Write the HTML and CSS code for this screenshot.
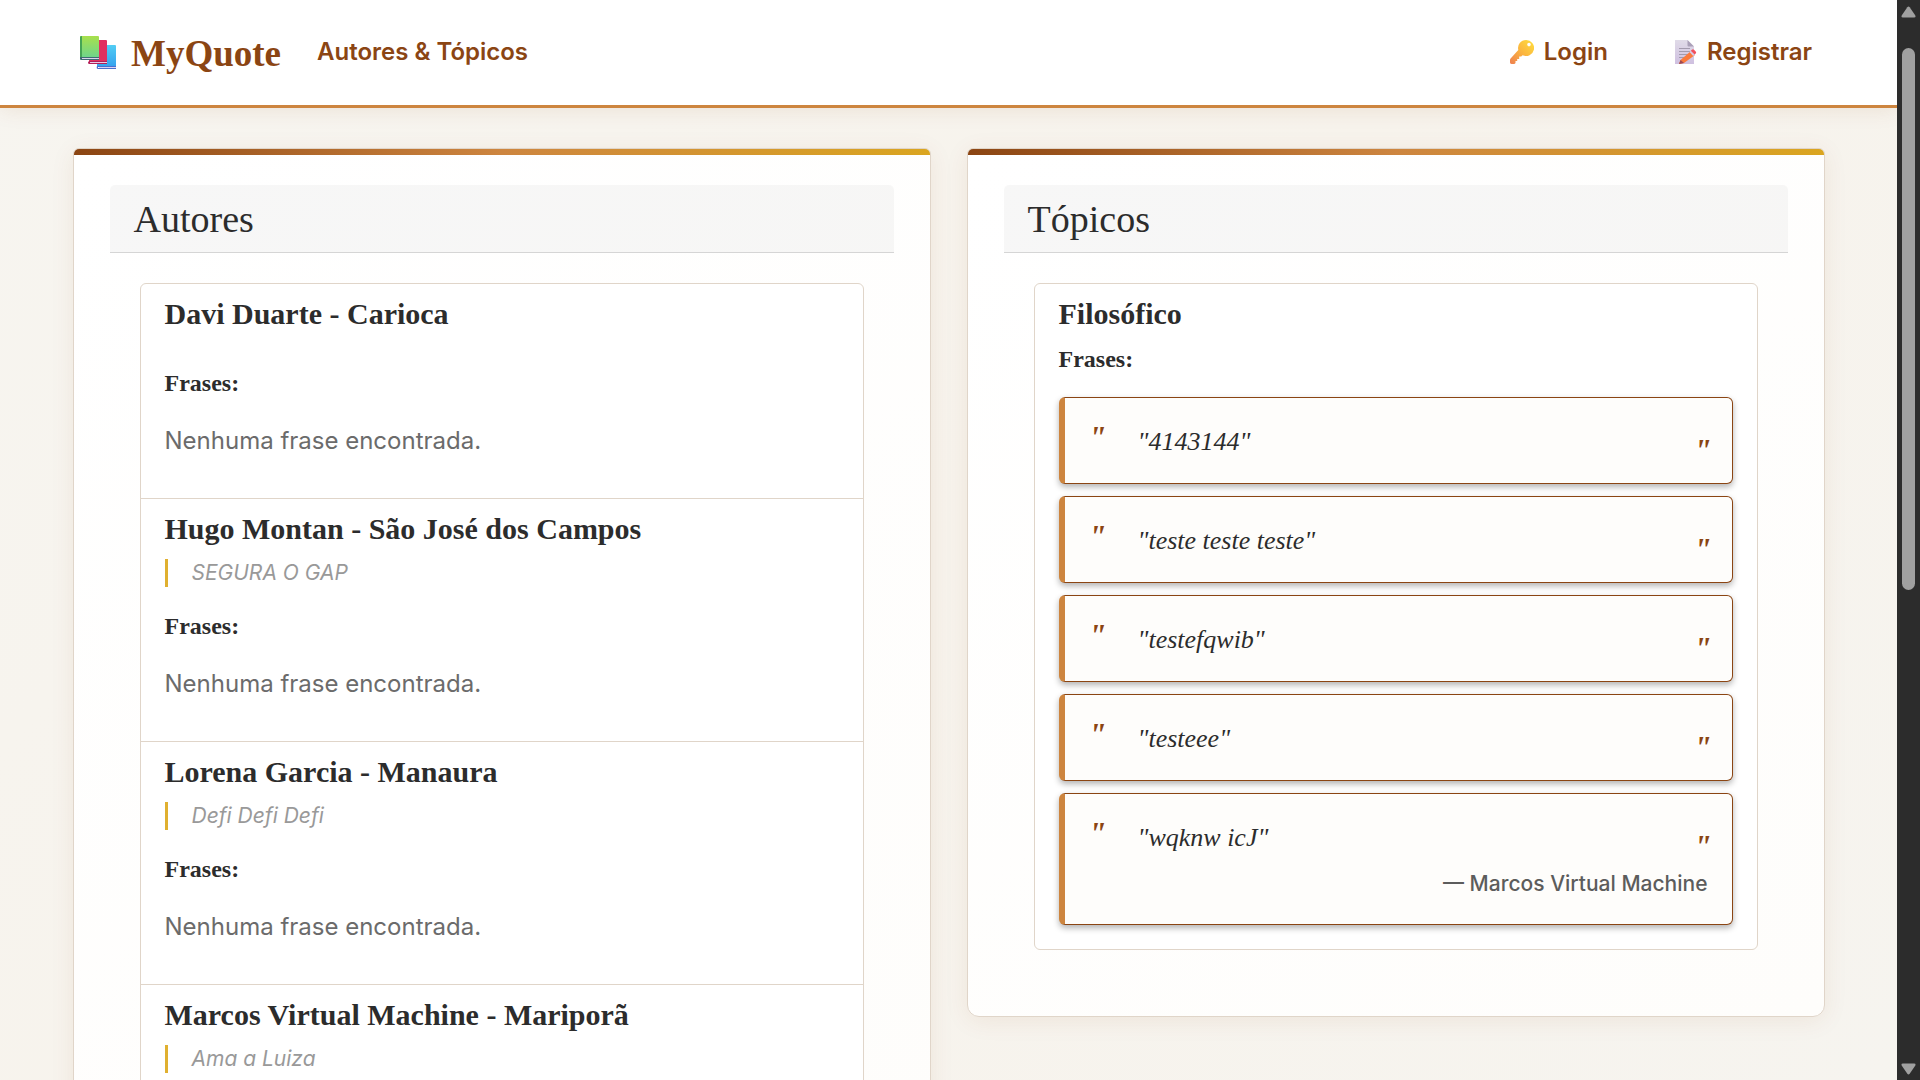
FILE: index.html
```html
<!DOCTYPE html>
<html lang="pt-BR">
<head>
<meta charset="utf-8">
<title>MyQuote</title>
<link rel="stylesheet" href="styles.css">
</head>
<body>
<div class="page">
  <header class="navbar">
    <nav class="nav-inner">
      <a class="brand" href="#">
        <svg class="brand-icon" viewBox="0 0 36 34" aria-hidden="true">
          <defs>
            <linearGradient id="green" x1="0" y1="0" x2="0" y2="1"><stop offset="0" stop-color="#a8e04c"/><stop offset="1" stop-color="#6fd58a"/></linearGradient>
            <linearGradient id="blue" x1="0" y1="0" x2="0" y2="1"><stop offset="0" stop-color="#52cdf4"/><stop offset="1" stop-color="#36a3ee"/></linearGradient>
          </defs>
          <path d="M17 9h18a1 1 0 0 1 1 1v20H17z" fill="url(#blue)"/>
          <path d="M17 30h19v1H18v1h18v1H18q-2 0-1-3z" fill="#4b6fce"/><path d="M19 31h17v1H19z" fill="#d9d5f3"/>
          <path d="M9 4h17a1 1 0 0 1 1 1v20H9z" fill="#e0305f"/>
          <path d="M9 25h18v3H9q-2-1 0-3z" fill="#b31f58"/><path d="M10 26h17v1H10z" fill="#e5cbe6"/>
          <path d="M1 0h17a1 1 0 0 1 1 1v20H0V1q0-1 1-1z" fill="url(#green)"/>
          <path d="M0 1q0-1 2-1v21H0z" fill="#45a455"/>
          <path d="M0 21h19v3H1q-2-1-1-3z" fill="#3f6b73"/><path d="M2 22h17v1H2z" fill="#ddd3ec"/>
        </svg>
        <span>MyQuote</span>
      </a>
      <a class="nav-link" href="#">Autores &amp; Tópicos</a>
      <div class="nav-actions">
        <a class="nav-link" href="#">
          <svg class="nav-icon" viewBox="0 0 24 24" aria-hidden="true">
            <defs><linearGradient id="key" x1="1" y1="0" x2="0" y2="1"><stop offset="0" stop-color="#ffe03e"/><stop offset=".5" stop-color="#fbb53f"/><stop offset="1" stop-color="#ee7f50"/></linearGradient></defs>
            <path fill="url(#key)" fill-rule="evenodd" d="M16 0a8 8 0 0 0-7.700 10L.6 18.500Q0 19.200 0 20v2.500Q.2 24 1.800 24H4q1 0 1.500-1v-2h1.700v-2h2v-2.400h2l1.400-1.400A8 8 0 1 0 16 0zm3 2.800a1.800 1.800 0 1 1 0 3.600 1.800 1.800 0 0 1 0-3.600z"/>
          </svg>
          <span>Login</span>
        </a>
        <a class="nav-link" href="#">
          <svg class="nav-icon" viewBox="0 0 24 24" aria-hidden="true">
            <defs><linearGradient id="sheet" x1="0" y1="0" x2="0" y2="1"><stop offset="0" stop-color="#e0dbe8"/><stop offset="1" stop-color="#cfc0e0"/></linearGradient></defs>
            <path d="M2 0h12.500L21 6.500V24H2z" fill="url(#sheet)"/>
            <path d="M14.500 0 21 6.500h-5.500a1 1 0 0 1-1-1z" fill="#aaa0b8"/>
            <path d="M6 8.500h11M6 11.500h11M6 14.500h11M6 17.500h6" stroke="#a39bae" stroke-width="1"/>
            <path d="m18 11 4 4L11 23l-5 1 1.500-4z" fill="#fb7a3c"/>
            <path d="m7.500 20 3.500 3-5 1z" fill="#9c4a55"/>
            <path d="m16.500 12 1.500-1.500 4 4-1.800 1.500z" fill="#d5cbe6"/>
            <path d="m17.800 10.700 1.200-1q1-.8 2 .1l1.700 1.700q1 1 0 2l-1 1z" fill="#f2505c"/>
          </svg>
          <span>Registrar</span>
        </a>
      </div>
    </nav>
  </header>

  <main class="columns">
    <section class="card">
      <h2 class="card-title">Autores</h2>
      <ul class="list">
        <li class="item">
          <h3 class="item-title">Davi Duarte - Carioca</h3>
          <h4 class="item-label spaced">Frases:</h4>
          <p class="empty">Nenhuma frase encontrada.</p>
        </li>
        <li class="item">
          <h3 class="item-title">Hugo Montan - São José dos Campos</h3>
          <p class="bio">SEGURA O GAP</p>
          <h4 class="item-label spaced">Frases:</h4>
          <p class="empty">Nenhuma frase encontrada.</p>
        </li>
        <li class="item">
          <h3 class="item-title">Lorena Garcia - Manaura</h3>
          <p class="bio">Defi Defi Defi</p>
          <h4 class="item-label spaced">Frases:</h4>
          <p class="empty">Nenhuma frase encontrada.</p>
        </li>
        <li class="item">
          <h3 class="item-title">Marcos Virtual Machine - Mariporã</h3>
          <p class="bio">Ama a Luiza</p>
        </li>
      </ul>
    </section>

    <section class="card">
      <h2 class="card-title">Tópicos</h2>
      <ul class="list">
        <li class="item topic">
          <h3 class="item-title">Filosófico</h3>
          <h4 class="item-label">Frases:</h4>
          <div class="quotes">
            <blockquote class="quote"><p class="quote-text">"4143144"</p></blockquote>
            <blockquote class="quote"><p class="quote-text">"teste teste teste"</p></blockquote>
            <blockquote class="quote"><p class="quote-text">"testefqwib"</p></blockquote>
            <blockquote class="quote"><p class="quote-text">"testeee"</p></blockquote>
            <blockquote class="quote"><p class="quote-text">"wqknw icJ"</p><footer class="quote-author">— Marcos Virtual Machine</footer></blockquote>
          </div>
        </li>
      </ul>
    </section>
  </main>
</div>
<div class="scrollbar" aria-hidden="true">
  <svg class="arrow" viewBox="0 0 15 12"><path d="M6.300 1.200q1.200-1.600 2.400 0l5.500 8q1 2.300-1 2.300H1.800q-2 0-1-2.300z" fill="#a0a0a0"/></svg>
  <div class="track"><div class="thumb"></div></div>
  <svg class="arrow" viewBox="0 0 15 12"><path d="M6.300 10.800q1.200 1.600 2.400 0l5.500-8q1-2.300-1-2.300H1.800q-2 0-1 2.300z" fill="#a0a0a0"/></svg>
</div>
</body>
</html>
```
FILE: styles.css
```css
:root {
  --brown: #8b4513;
  --copper: #cd853f;
  --gold: #daa520;
  --ink: #2c2c2c;
  --line: #e0d5c9;
  --serif: "Liberation Serif", serif;
  --sans: Inter, "Liberation Sans", sans-serif;
}

* { box-sizing: border-box; }

h2, h3, h4, p, ul, blockquote { margin: 0; padding: 0; }

body {
  margin: 0;
  display: flex;
  height: 100vh;
  font-family: var(--sans);
  font-size: 24px;
  color: var(--ink);
}

.page {
  flex: 1;
  min-width: 0;
  overflow-y: auto;
  scrollbar-width: none;
  background: linear-gradient(135deg, #f7f5f0 0%, #f7f3ec 50%, #f6f4ef 100%);
}

/* Navigation */
.navbar {
  background: #fff;
  border-bottom: 3px solid var(--copper);
  box-shadow: 0 2px 20px rgba(139, 69, 19, 0.1);
}

.nav-inner {
  display: flex;
  align-items: center;
  height: 105px;
  padding: 0 85px 2px 80px;
  gap: 36px;
}

.nav-inner a {
  display: flex;
  align-items: center;
  color: var(--brown);
  text-decoration: none;
}

.brand {
  gap: 15px;
  padding-top: 3px;
  font-family: var(--serif);
  font-size: 37px;
  font-weight: 700;
}

.brand-icon { width: 36px; height: 34px; }

.nav-link { gap: 10px; font-weight: 600; }

.nav-icon { width: 24px; height: 24px; }

.nav-actions { display: flex; gap: 65px; margin-left: auto; }

/* Cards */
.columns {
  display: grid;
  grid-template-columns: 1fr 1fr;
  align-items: start;
  gap: 36px;
  max-width: 1824px;
  margin: 0 auto;
  padding: 40px 36px;
}

.card {
  position: relative;
  overflow: hidden;
  padding: 36px;
  background: linear-gradient(145deg, #fff 0%, #fefdfb 100%);
  border: 1px solid var(--line);
  border-radius: 6px 6px 12px 12px;
  box-shadow: 0 4px 24px rgba(139, 69, 19, 0.08);
}

.card::before {
  content: "";
  position: absolute;
  inset: 0 0 auto;
  height: 6px;
  background: linear-gradient(90deg, var(--brown), var(--copper), var(--gold));
}

.card-title {
  padding: 12px 24px 11px;
  background: rgba(0, 0, 0, 0.03);
  border-bottom: 1px solid #d5d5d5;
  border-radius: 5px 5px 0 0;
  font-family: var(--serif);
  font-size: 38px;
  font-weight: 400;
  line-height: 44px;
}

.list {
  margin: 30px;
  list-style: none;
  background: #fff;
  border: 1px solid var(--line);
  border-radius: 6px;
}

.item { padding: 12px 24px 39px; }
.item + .item { border-top: 1px solid var(--line); }
.topic { padding-bottom: 24px; }

.item-title,
.item-label {
  font-family: var(--serif);
  font-weight: 700;
}

.item-title { margin-bottom: 12px; font-size: 30px; line-height: 36px; }
.item-label { font-size: 24px; line-height: 30px; }
.spaced { margin-top: 24px; }
.item-title + .spaced { margin-top: 36px; }

.bio {
  padding-left: 24px;
  border-left: 3px solid #e0b030;
  color: #999;
  font-size: 21px;
  font-style: italic;
  line-height: 28px;
}

.empty { margin-top: 25px; color: #6b6b6b; line-height: 36px; }

/* Quotes */
.quotes { display: grid; gap: 12px; margin-top: 23px; }

.quote {
  padding: 26px 20px 23px 24px;
  background: #fefdfb;
  border: 1px solid var(--brown);
  border-left: 6px solid var(--copper);
  border-radius: 6px;
  box-shadow: 0 3px 6px rgba(0, 0, 0, 0.3);
}

.quote-text {
  display: flex;
  height: 36px;
  font-family: var(--serif);
  font-size: 26px;
  font-style: italic;
  line-height: 36px;
}

.quote-text::before,
.quote-text::after {
  content: '"';
  color: var(--brown);
  font-size: 32px;
  font-weight: 700;
}

.quote-text::before { width: 49px; line-height: 26px; }
.quote-text::after { margin-left: auto; line-height: 52px; }

.quote-author {
  margin-top: 11px;
  padding-right: 4px;
  color: #5c5c5c;
  font-size: 21px;
  font-weight: 500;
  line-height: 34px;
  text-align: right;
}

/* Scrollbar */
.scrollbar {
  display: flex;
  flex-direction: column;
  align-items: center;
  gap: 30px;
  width: 23px;
  padding: 6px 0 5px;
  background: #2c2c2c;
}

.arrow { width: 15px; height: 12px; flex: none; }
.track { flex: 1; width: 13px; }
.thumb { height: 55%; border-radius: 7px; background: #a0a0a0; }
```
